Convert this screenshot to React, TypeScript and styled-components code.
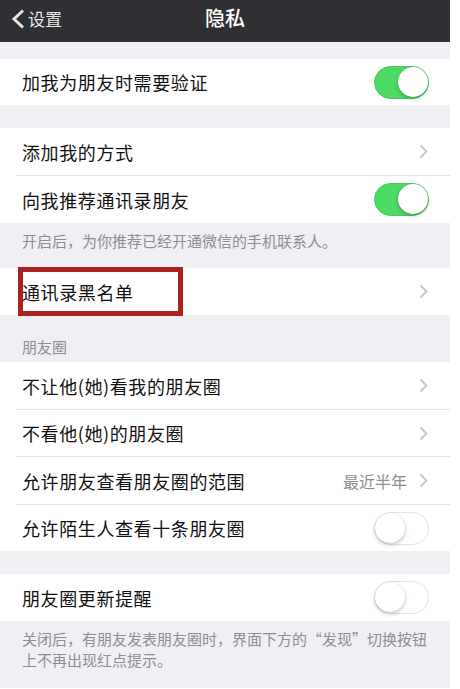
import React from "react";
import styled, { createGlobalStyle } from "styled-components";

const GlobalStyle = createGlobalStyle`
  html, body {
    margin: 0;
    padding: 0;
    background: #ffffff;
  }
  body {
    font-family: "Noto Sans CJK SC", "Noto Sans", sans-serif;
  }
`;

const Page = styled.div`
  width: 450px;
  height: 688px;
  background: #efeff4;
  overflow: hidden;
`;

const NavBar = styled.header`
  position: relative;
  height: 42px;
  background: #302f34;
  display: flex;
  align-items: center;
  justify-content: center;
  padding-bottom: 6px;
  box-sizing: border-box;
`;

const Back = styled.div`
  position: absolute;
  left: 11px;
  top: 9px;
  display: flex;
  align-items: center;
  gap: 3px;
  color: #e6e6e8;
  font-size: 17px;
  line-height: 20px;
`;

const Title = styled.h1`
  margin: 0;
  color: #ffffff;
  font-size: 20px;
  font-weight: 500;
  line-height: 24px;
`;

const Gap = styled.div<{ $h: number }>`
  height: ${(p) => p.$h}px;
`;

const Group = styled.section`
  background: #ffffff;
`;

const Row = styled.div<{ $h?: number }>`
  position: relative;
  height: ${(p) => p.$h ?? 47}px;
  display: flex;
  align-items: center;
  padding: 0 22px;
  font-size: 18px;
  color: #111111;
`;

const Label = styled.span`
  flex: 1;
  line-height: 24px;
  letter-spacing: 0.6px;
`;

const Value = styled.span`
  color: #8e8e93;
  font-size: 16px;
  margin-right: 12px;
`;

const Divider = styled.div`
  height: 1px;
  margin-left: 16px;
  background: #e3e3e6;
`;

const Note = styled.div<{ $top: number; $bottom: number }>`
  padding: ${(p) => p.$top}px 22px ${(p) => p.$bottom}px;
  font-size: 15px;
  line-height: 21px;
  color: #8e8e93;
`;

const Track = styled.div<{ $on: boolean }>`
  position: relative;
  width: 55px;
  height: 33px;
  border-radius: 17px;
  box-sizing: border-box;
  background: ${(p) => (p.$on ? "#4cd964" : "#ffffff")};
  border: 1.5px solid ${(p) => (p.$on ? "#46c95c" : "#e3e3e6")};
  margin-right: -1px;
`;

const Knob = styled.div<{ $on: boolean }>`
  position: absolute;
  top: 0;
  ${(p) => (p.$on ? "right: 0;" : "left: 0;")}
  width: 30px;
  height: 30px;
  border-radius: 50%;
  background: #ffffff;
  box-shadow: 0 2px 4px rgba(0, 0, 0, 0.22), 0 0 1px rgba(0, 0, 0, 0.15);
`;

const Highlight = styled.div`
  position: absolute;
  left: 18px;
  top: -1px;
  width: 165px;
  height: 49px;
  box-sizing: border-box;
  border: 5px solid #a8231f;
`;

const Switch = ({ on }: { on: boolean }) => (
  <Track $on={on}>
    <Knob $on={on} />
  </Track>
);

const Chevron = () => (
  <svg width="9" height="15" viewBox="0 0 9 15">
    <path d="M1.5 1.5 L7.5 7.5 L1.5 13.5" fill="none" stroke="#c7c7cc" strokeWidth="1.8" />
  </svg>
);

const BackArrow = () => (
  <svg width="14" height="20" viewBox="0 0 14 20">
    <path d="M12 1.5 L3 10 L12 18.5" fill="none" stroke="#e6e6e8" strokeWidth="3" />
  </svg>
);

export default function App() {
  return (
    <>
      <GlobalStyle />
      <Page>
        <NavBar>
          <Back>
            <BackArrow />
            <span>设置</span>
          </Back>
          <Title>隐私</Title>
        </NavBar>

        <Gap $h={17} />
        <Group>
          <Row $h={46}>
            <Label>加我为朋友时需要验证</Label>
            <Switch on />
          </Row>
        </Group>

        <Gap $h={23} />
        <Group>
          <Row>
            <Label>添加我的方式</Label>
            <Chevron />
          </Row>
          <Divider />
          <Row>
            <Label>向我推荐通讯录朋友</Label>
            <Switch on />
          </Row>
        </Group>
        <Note $top={7} $bottom={17}>开启后，为你推荐已经开通微信的手机联系人。</Note>

        <Group>
          <Row>
            <Label>通讯录黑名单</Label>
            <Chevron />
            <Highlight />
          </Row>
        </Group>
        <Note $top={21} $bottom={5}>朋友圈</Note>

        <Group>
          <Row>
            <Label>不让他(她)看我的朋友圈</Label>
            <Chevron />
          </Row>
          <Divider />
          <Row $h={46}>
            <Label>不看他(她)的朋友圈</Label>
            <Chevron />
          </Row>
          <Divider />
          <Row>
            <Label>允许朋友查看朋友圈的范围</Label>
            <Value>最近半年</Value>
            <Chevron />
          </Row>
          <Divider />
          <Row $h={46}>
            <Label>允许陌生人查看十条朋友圈</Label>
            <Switch on={false} />
          </Row>
        </Group>

        <Gap $h={23} />
        <Group>
          <Row>
            <Label>朋友圈更新提醒</Label>
            <Switch on={false} />
          </Row>
        </Group>
        <Note $top={7} $bottom={16}>
          关闭后，有朋友发表朋友圈时，界面下方的“发现”切换按钮上不再出现红点提示。
        </Note>
      </Page>
    </>
  );
}
